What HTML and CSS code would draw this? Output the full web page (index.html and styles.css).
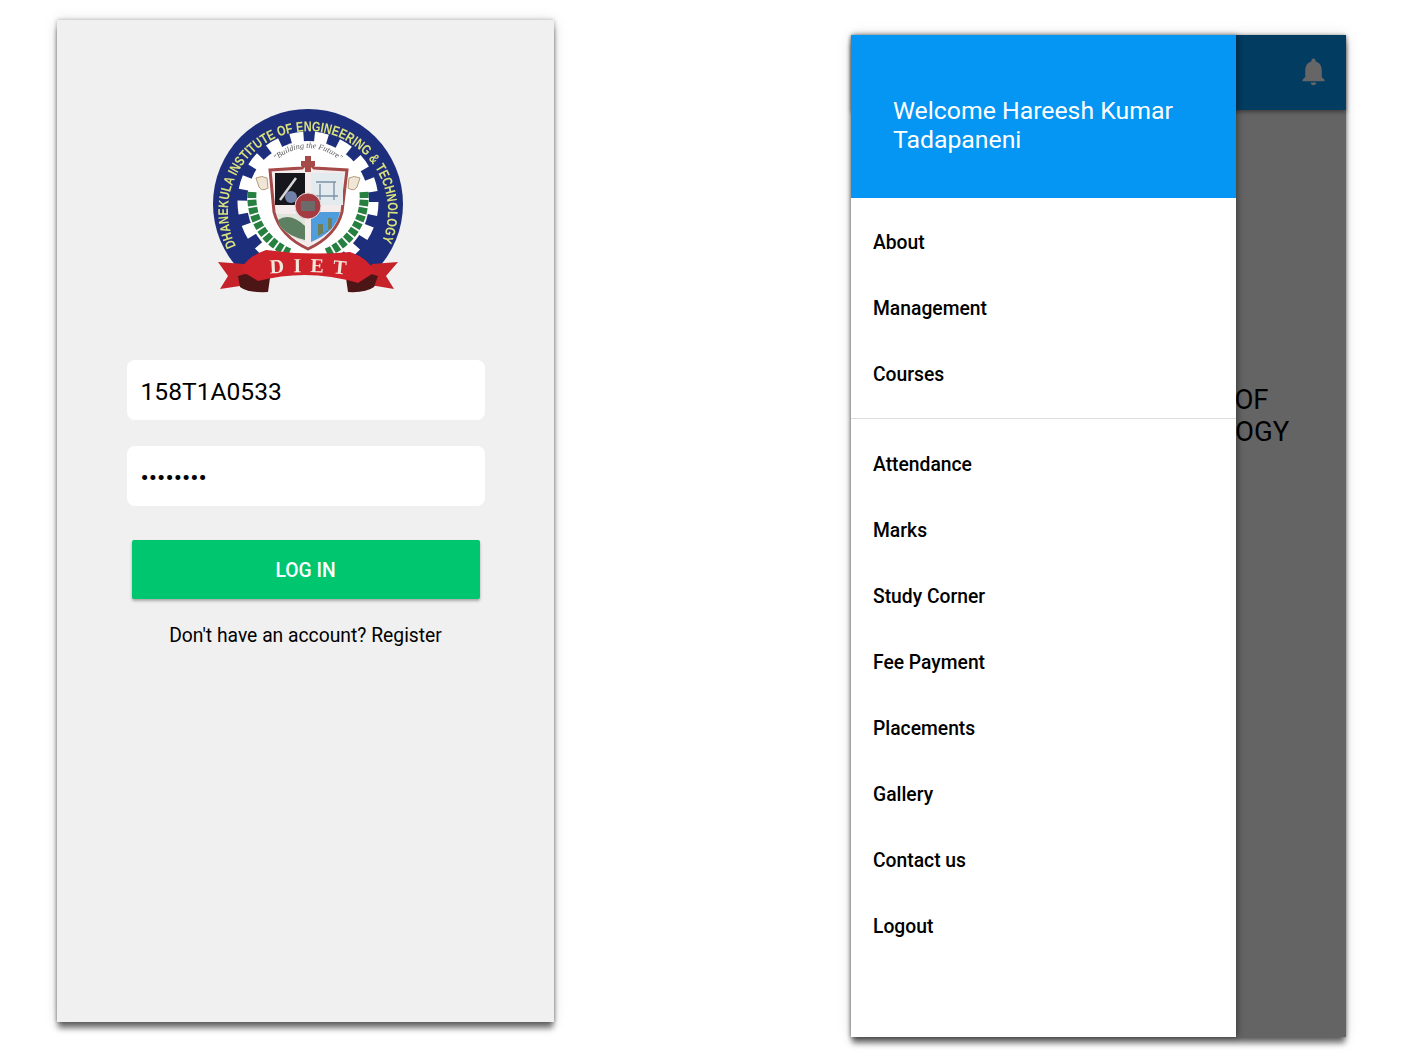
FILE: index.html
```html
<!doctype html>
<html lang="en">
  <head>
    <meta charset="utf-8">
    <meta name="viewport" content="width=device-width, initial-scale=1, shrink-to-fit=no">
    <title>DIET App</title>
    <link rel="stylesheet" href="styles.css">
  </head>
  <body>
    <!-- login screen -->
    <section class="screen login">
      <svg class="logo" viewBox="0 0 240 220" width="240" height="220">
        <defs>
          <filter id="soft"><feGaussianBlur stdDeviation="0.5"/></filter>
          <clipPath id="aboveRibbon"><rect x="0" y="0" width="240" height="176"/></clipPath>
          <path id="ringArc" d="M46 156 A80 80 0 1 1 190 156"/>
          <path id="mottoArc" d="M80 78 A46 46 0 0 1 156 78"/>
          <path id="dietArc" d="M76 184 Q118 180 160 185"/>
        </defs>
        <g filter="url(#soft)">
          <g clip-path="url(#aboveRibbon)">
            <circle cx="118" cy="114" r="95" fill="#1d2d7c"/>
            <circle cx="118" cy="112" r="65" fill="none" stroke="#fff" stroke-width="11" stroke-dasharray="13 11.030"/>
            <circle cx="118" cy="112" r="61" fill="#fff"/>
          </g>
          <text class="ring-text"><textPath href="#ringArc" textLength="318" lengthAdjust="spacingAndGlyphs">DHANEKULA INSTITUTE OF ENGINEERING &amp; TECHNOLOGY</textPath></text>
          <text class="motto"><textPath href="#mottoArc" startOffset="50%">"Building the Future"</textPath></text>

          <path d="M62 102 C60 128 74 152 100 163" fill="none" stroke="#27803f" stroke-width="9" stroke-dasharray="6 1.8"/>
          <path d="M174 102 C176 128 162 152 136 163" fill="none" stroke="#27803f" stroke-width="9" stroke-dasharray="6 1.8"/>
          <path d="M66 88 q6 -3 11 0 l1 10 q-6 4 -9 -1z" fill="#efe6d6" stroke="#b59a78"/>
          <path d="M170 88 q-6 -3 -11 0 l-1 10 q6 4 9 -1z" fill="#efe6d6" stroke="#b59a78"/>

          <path d="M80 80 L112 78 L118 72 L124 78 L157 80 L152 122 Q146 146 118 159 Q90 146 84 122Z" fill="#f4ecec" stroke="#a54848" stroke-width="3"/>
          <path d="M115 66 h6 v5 h4 v5 h-4 v6 h-6 v-6 h-4 v-5 h4z" fill="#a54848"/>
          <rect x="85" y="83" width="30" height="32" fill="#14141c"/>
          <path d="M90 110 L106 88" stroke="#d8d8d8" stroke-width="2.5"/>
          <circle cx="101" cy="107" r="6" fill="#6f80a8"/>
          <rect x="121" y="83" width="32" height="32" fill="#e4ebee"/>
          <path d="M126 106 h22 M130 94 v16 M144 92 v18 M126 92 h20" stroke="#7e93a8" stroke-width="1.4"/>
          <path d="M87 124 H115 V152 Q98 146 90 136Z" fill="#dfe4dc"/>
          <path d="M88 130 Q100 122 115 136 V150 Q98 146 90 136Z" fill="#5d7f62"/>
          <path d="M121 122 H150 Q146 142 121 152Z" fill="#4f9ddd"/>
          <path d="M128 146 v-12 h5 v8 h5 v-14 h4 v10" fill="#6e7f5c"/>
          <circle cx="118" cy="116" r="13" fill="#a53a42" stroke="#e8d8d8"/>
          <rect x="111" y="111" width="14" height="10" fill="#6d6a6a"/>

          <path d="M28 172 L54 174 L64 196 L50 196 L30 199 L38 186Z" fill="#c6242c"/>
          <path d="M208 172 L182 174 L172 196 L186 196 L204 199 L196 186Z" fill="#c6242c"/>
          <path d="M48 186 Q62 180 80 188 L78 202 Q58 203 50 197Z" fill="#4d1416"/>
          <path d="M188 186 Q174 180 156 188 L158 202 Q176 203 184 197Z" fill="#4d1416"/>
          <path d="M50 180 Q58 166 76 160 Q118 166 160 162 Q178 168 185 182 L168 193 Q118 178 68 191Z" fill="#d0202a"/>
          <text class="diet"><textPath href="#dietArc" startOffset="4">DIET</textPath></text>
        </g>
      </svg>

      <form class="login-form">
        <input class="field" type="text" value="158T1A0533">
        <input class="field field-pass" type="password" value="12345678">
        <button class="login-btn" type="button">LOG IN</button>
        <p class="register">Don't have an account? Register</p>
      </form>
    </section>

    <!-- home screen with the drawer open -->
    <section class="screen home">
      <header class="appbar">
        <svg class="bell" viewBox="0 0 24 24" width="33" height="33">
          <path fill="#fff" d="M12 22c1.1 0 2-.9 2-2h-4c0 1.100.9 2 2 2zm6-6v-5c0-3.070-1.640-5.640-4.500-6.320V4c0-.83-.67-1.500-1.500-1.500s-1.500.67-1.500 1.500v.68C7.630 5.360 6 7.920 6 11v5l-2 2v1h16v-1l-2-2z"/>
        </svg>
      </header>
      <div class="home-title">
        DHANEKULA INSTITUTE OF<br>
        ENGINEERING &amp; TECHNOLOGY
      </div>
      <div class="scrim"></div>

      <aside class="drawer">
        <div class="drawer-head">Welcome Hareesh Kumar Tadapaneni</div>
        <ul class="menu">
          <li>About</li>
          <li>Management</li>
          <li>Courses</li>
        </ul>
        <ul class="menu menu-second">
          <li>Attendance</li>
          <li>Marks</li>
          <li>Study Corner</li>
          <li>Fee Payment</li>
          <li>Placements</li>
          <li>Gallery</li>
          <li>Contact us</li>
          <li>Logout</li>
        </ul>
      </aside>
    </section>
  </body>
</html>
```

FILE: styles.css
```css
html, body {
  margin: 0;
  height: 100%;
}
body {
  background-color: white;
  color: black;
  font-family: Roboto, "Liberation Sans", sans-serif;
  display: flex;
  align-items: flex-start;
  gap: 297px;
  padding-left: 57px;
  box-sizing: border-box;
  overflow: hidden;
}
.screen {
  width: 497px;
  height: 1002px;
  box-shadow: 0 7px 6px -1px rgba(0, 0, 0, 0.55), 0 0 4px rgba(0, 0, 0, 0.3), 0 0 14px rgba(0, 0, 0, 0.1);
  flex: none;
}

/* login */
.login {
  margin-top: 20px;
  background-color: #f0f0f0;
  display: flex;
  flex-direction: column;
  align-items: center;
}
.logo {
  display: block;
  margin: 70px 0 0 9px;
}
.ring-text {
  font: bold 14px "Liberation Sans", sans-serif;
  fill: #dbe27c;
}
.motto {
  font: italic 8px "Liberation Serif", serif;
  fill: #555;
  text-anchor: middle;
}
.diet {
  font: bold 20px "Liberation Serif", serif;
  letter-spacing: 9px;
  fill: #f3e8dc;
}
.login-form {
  width: 358px;
  margin-top: 50px;
  display: flex;
  flex-direction: column;
  align-items: center;
}
.field {
  width: 100%;
  height: 60px;
  box-sizing: border-box;
  padding: 2px 14px 0;
  margin-bottom: 26px;
  border: none;
  border-radius: 8px;
  background-color: white;
  font-family: Roboto, sans-serif;
  font-size: 24.6px;
  color: black;
}
.field-pass {
  margin-bottom: 34px;
}
.login-btn {
  width: 348px;
  height: 59px;
  padding-top: 2px;
  border: none;
  border-radius: 2px;
  background-color: #00c66f;
  color: white;
  font-family: Roboto, sans-serif;
  font-size: 19.3px;
  font-weight: 500;
  box-shadow: 0 2px 3px rgba(0, 0, 0, 0.3);
}
.register {
  margin: 26px 0 0;
  font-size: 19.3px;
  line-height: 22px;
}

/* home */
.home {
  width: 495px;
  margin-top: 35px;
  background-color: #fafafa;
  position: relative;
}
.appbar {
  height: 75px;
  background-color: #0596f3;
  display: flex;
  align-items: center;
  justify-content: flex-end;
  padding-right: 16px;
  box-sizing: border-box;
  box-shadow: 0 2px 4px rgba(0, 0, 0, 0.4);
}
.bell {
  display: block;
  margin-top: -3px;
}
.home-title {
  margin-top: 274px;
  text-align: center;
  font-size: 27.5px;
  line-height: 32px;
  white-space: nowrap;
}
.scrim {
  position: absolute;
  inset: 0;
  background-color: rgba(0, 0, 0, 0.6);
}
.drawer {
  position: absolute;
  left: 0;
  top: 0;
  bottom: 0;
  width: 385px;
  background-color: white;
  box-shadow: 2px 0 6px rgba(0, 0, 0, 0.35);
}
.drawer-head {
  height: 163px;
  box-sizing: border-box;
  padding: 61px 40px 0 42px;
  background-color: #0596f3;
  color: white;
  font-size: 24.8px;
  line-height: 29px;
}
.menu {
  list-style: none;
  margin: 0;
  padding: 11px 0;
  font-size: 19.3px;
  font-weight: 500;
}
.menu li {
  height: 66px;
  line-height: 68px;
  padding-left: 22px;
}
.menu-second {
  border-top: 1px solid #dddddd;
  padding-top: 12px;
}
```
